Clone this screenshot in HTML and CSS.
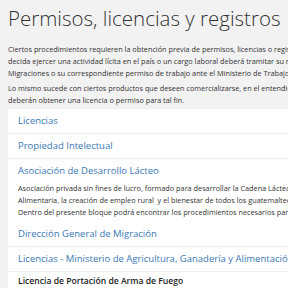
FILE: index.html
```html
<!DOCTYPE html>
<html lang="es">
<head>
    <meta charset="UTF-8">
    <meta name="viewport" content="width=device-width, initial-scale=1.0">
    <title>Permisos, licencias y registros</title>
    <link rel="stylesheet" href="styles.css">
</head>
<body>
    <div class="content">
        <h1>Permisos, licencias y registros</h1>
        <p>Ciertos procedimientos requieren la obtención previa de permisos, licencias o registros. Quien<br>
        decida ejercer una actividad lícita en el país o un cargo laboral deberá tramitar su respectivo permiso en<br>
        Migraciones o su correspondiente permiso de trabajo ante el Ministerio de Trabajo.</p>
        <p>Lo mismo sucede con ciertos productos que deseen comercializarse, en el entendido que previamente<br>
        deberán obtener una licencia o permiso para tal fin.</p>
        <div class="panel">
            <div class="item"><a href="#">Licencias</a></div>
            <div class="item"><a href="#">Propiedad Intelectual</a></div>
            <div class="item open">
                <a href="#">Asociación de Desarrollo Lácteo</a>
                <p class="desc">Asociación privada sin fines de lucro, formado para desarrollar la Cadena Láctea, la Seguridad<br>
                Alimentaria, la creación de empleo rural &nbsp;y el bienestar de todos los guatemaltecos y sus familias.<br>
                Dentro del presente bloque podrá encontrar los procedimientos necesarios para su gestión.</p>
            </div>
            <div class="item"><a href="#">Dirección General de Migración</a></div>
            <div class="item"><a href="#">Licencias - Ministerio de Agricultura, Ganadería y Alimentación</a></div>
            <div class="item sub"><a href="#">Licencia de Portación de Arma de Fuego</a></div>
        </div>
    </div>
</body>
</html>
```

FILE: styles.css
```css
body {
    font-family: "Open Sans", sans-serif;
    margin: 0;
    padding: 0;
    background-color: #f2f2f2;
    color: #333;
    overflow: hidden;
}
.content {
    padding: 0 0 0 8px;
    width: 420px;
}
h1 {
    font-weight: 300;
    font-size: 20.5px;
    line-height: 30px;
    margin: 3px 0 10px 0;
    white-space: nowrap;
}
.content > p {
    font-size: 7.3px;
    line-height: 12px;
    margin: 0 0 3px 0;
    white-space: nowrap;
}
.panel {
    background-color: #fff;
    margin-top: 0;
}
.item {
    border-bottom: 1px solid #eee;
    padding: 0 10px;
}
.item a {
    display: block;
    color: #3a78b5;
    text-decoration: none;
    font-size: 9.5px;
    line-height: 24px;
    white-space: nowrap;
}
.desc {
    font-size: 7.3px;
    line-height: 12px;
    margin: -1px 0 4px 0;
    white-space: nowrap;
}
.open {
    border-bottom: none;
}
.sub {
    padding-top: 2px;
    line-height: 14px;
}
.sub a {
    display: inline-block;
    vertical-align: top;
    color: #222;
    font-weight: 600;
    font-size: 8.6px;
    line-height: 14px;
    border-bottom: 1px solid #ddd;
}
```
